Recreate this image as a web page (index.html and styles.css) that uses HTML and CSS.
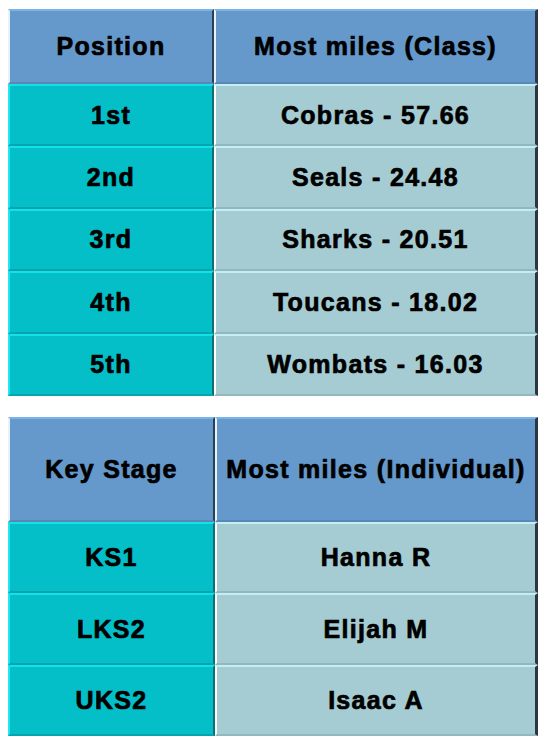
FILE: index.html
```html
<!DOCTYPE html>
<html>
<head>
<meta charset="utf-8">
<link rel="stylesheet" href="styles.css">
</head>
<body>
<div class="page">
  <table class="board board-class">
    <colgroup><col class="c1"><col class="c2"></colgroup>
    <tr class="head"><th>Position</th><th>Most miles (Class)</th></tr>
    <tr><td class="k">1st</td><td class="v">Cobras - 57.66</td></tr>
    <tr><td class="k">2nd</td><td class="v">Seals - 24.48</td></tr>
    <tr><td class="k">3rd</td><td class="v">Sharks - 20.51</td></tr>
    <tr><td class="k">4th</td><td class="v">Toucans - 18.02</td></tr>
    <tr><td class="k">5th</td><td class="v">Wombats - 16.03</td></tr>
  </table>
  <table class="board board-ind">
    <colgroup><col class="c1"><col class="c2"></colgroup>
    <tr class="head"><th>Key Stage</th><th>Most miles (Individual)</th></tr>
    <tr><td class="k">KS1</td><td class="v">Hanna R</td></tr>
    <tr><td class="k">LKS2</td><td class="v">Elijah M</td></tr>
    <tr><td class="k">UKS2</td><td class="v">Isaac A</td></tr>
  </table>
</div>
</body>
</html>
```

FILE: styles.css
```css
html, body {
  margin: 0;
  padding: 0;
  background: #ffffff;
}
.page {
  padding: 9px 14px 0 8px;
  display: flex;
  flex-direction: column;
  gap: 21px;
}
.board {
  border-collapse: separate;
  border-spacing: 0;
  width: 530px;
  table-layout: fixed;
  font-family: "Liberation Sans", Arial, sans-serif;
  font-weight: bold;
  font-size: 25px;
  letter-spacing: 1.3px;
  -webkit-text-stroke: 0.7px #000;
  color: #000;
}
.board-class .c1 { width: 206px; }
.board-ind .c1 { width: 207px; }
.board th, .board td {
  text-align: center;
  vertical-align: middle;
  padding: 0;
  white-space: nowrap;
  border-style: solid;
  border-width: 2px 2px 2px 2px;
}
.board th {
  background: #6599cc;
  border-color: #7ab3e6 #2b3f52 #5a88b6 #e8f2fb;
}
.board td.k {
  background: #04bfc8;
  border-color: #14e0ea #0f6e74 #06a4ac #22e6f0;
}
.board td.v {
  background: #a5ccd2;
  border-color: #c3eef3 #3b4a4e #92b7bd #ffffff;
}
.board tr > :last-child {
  border-right: 3px solid #2a3640;
}
.board-class .head th { height: 71px; }
.board-class td { height: 58.4px; }
.board-ind .head th { height: 101px; }
.board-ind td { height: 67.4px; }
```
